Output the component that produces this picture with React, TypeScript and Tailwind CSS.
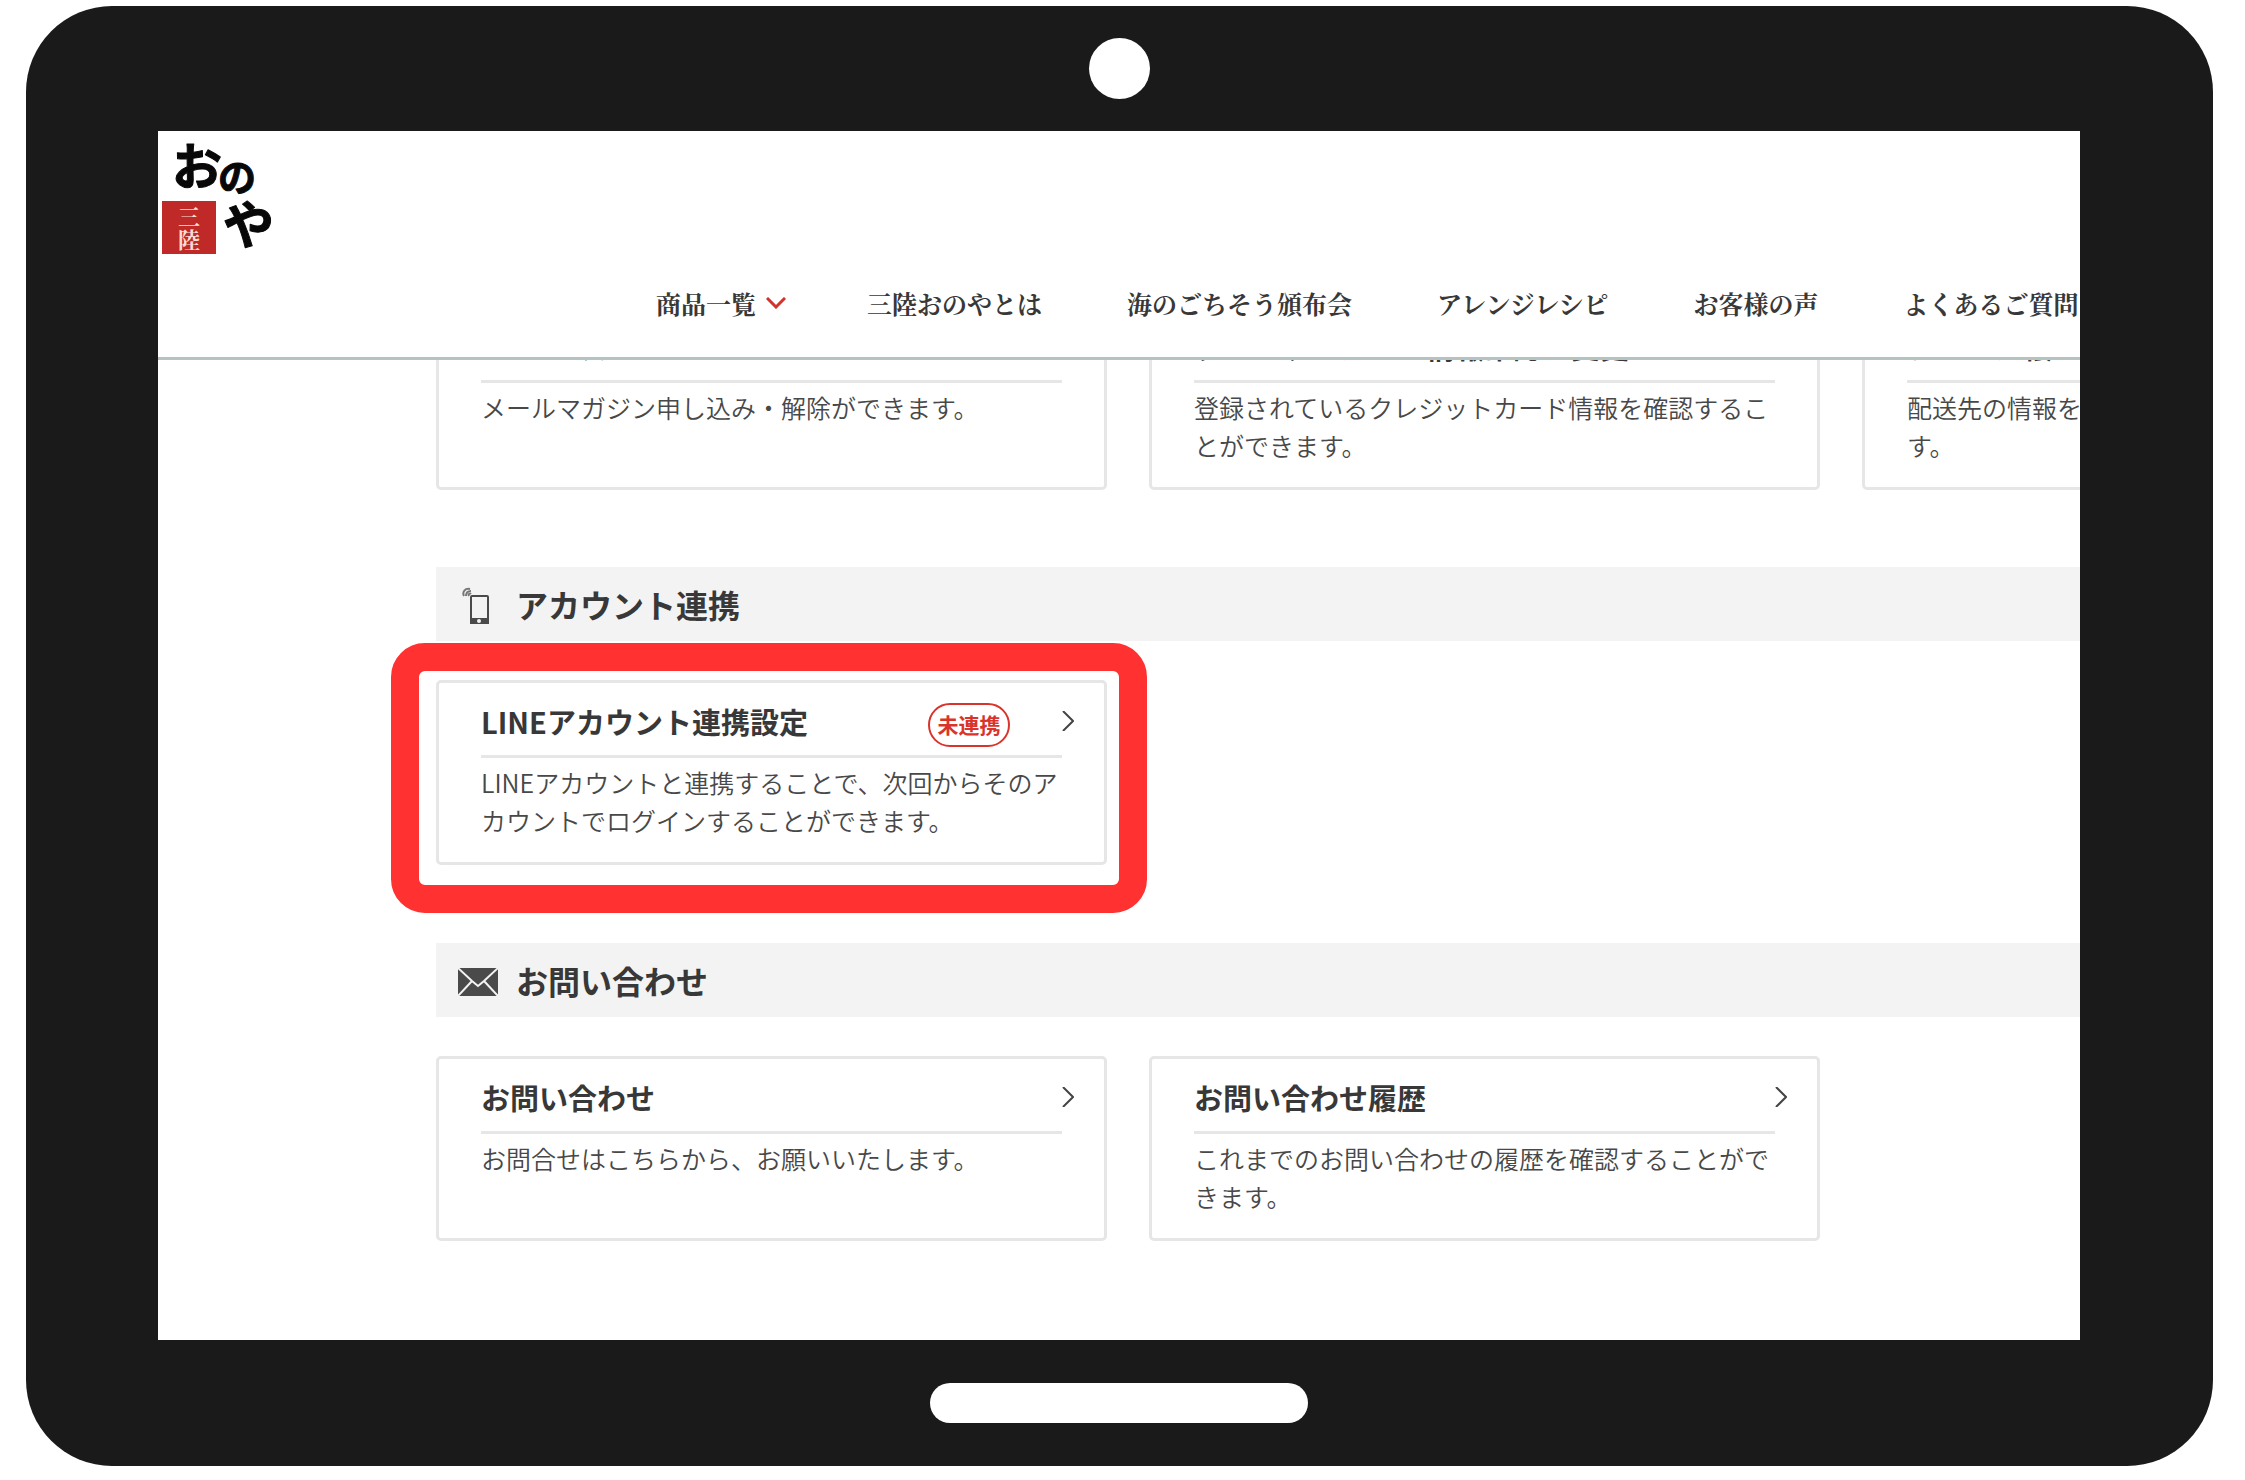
import type { ReactNode } from 'react';

interface CardProps {
  title: string;
  text: string;
  badge?: string;
}

const NAV_ITEMS = [
  { label: '商品一覧', hasMenu: true },
  { label: '三陸おのやとは' },
  { label: '海のごちそう頒布会' },
  { label: 'アレンジレシピ' },
  { label: 'お客様の声' },
  { label: 'よくあるご質問' },
];

const SETTING_CARDS: CardProps[] = [
  { title: 'メールマガジン', text: 'メールマガジン申し込み・解除ができます。' },
  {
    title: 'クレジットカード情報確認・変更',
    text: '登録されているクレジットカード情報を確認することができます。',
  },
  { title: 'アドレス帳一覧', text: '配送先の情報を確認・変更・削除することができます。' },
];

const CONTACT_CARDS: CardProps[] = [
  { title: 'お問い合わせ', text: 'お問合せはこちらから、お願いいたします。' },
  {
    title: 'お問い合わせ履歴',
    text: 'これまでのお問い合わせの履歴を確認することができます。',
  },
];

function Logo() {
  return (
    <svg viewBox="0 0 120 130" className="h-[130px] w-[120px]" role="img" aria-label="三陸 おのや">
      <g fill="#080808" stroke="#080808" strokeWidth="1" strokeLinejoin="round" fontWeight="700">
        <text x="14" y="54" fontSize="50">
          お
        </text>
        <text x="60" y="60" fontSize="38">
          の
        </text>
        <text x="65" y="113" fontSize="51">
          や
        </text>
      </g>
      <rect x="4" y="70" width="54" height="53" fill="#bf2a28" />
      <g
        fill="#f7dcd4"
        fontFamily="'Noto Serif CJK JP', 'Noto Sans CJK JP', serif"
        fontSize="22"
        fontWeight="700"
        textAnchor="middle"
      >
        <text x="31" y="94">
          三
        </text>
        <text x="31" y="117">
          陸
        </text>
      </g>
    </svg>
  );
}

function PhoneIcon() {
  return (
    <svg viewBox="0 0 28 38" className="mt-1 ml-1 h-[38px] w-[28px]" fill="none" aria-hidden="true">
      <path d="M2 9C0 5 3 1 8 2M4 9c0-3 2-5 5-5M7 9c-1-2 1-3 2-2" stroke="#777" strokeWidth="2" />
      <rect x="9" y="9" width="17" height="27" rx="1" stroke="#4a4a4a" strokeWidth="2" />
      <path d="M8 31h19v6H8z" fill="#4a4a4a" />
      <circle cx="17" cy="34" r="2" fill="#f3f3f3" />
    </svg>
  );
}

function MailIcon() {
  return (
    <svg viewBox="0 0 40 28" className="mt-1 h-[28px] w-[40px]" fill="none" aria-hidden="true">
      <path d="M0 0h40v28H0z" fill="#4a4a4a" />
      <path d="M0 0l14 13l6 5l6-5L40 0M0 28l14-15M40 28L26 13" stroke="#f3f3f3" strokeWidth="2" />
    </svg>
  );
}

function Card({ title, text, badge }: CardProps) {
  return (
    <a href="#" className="block h-[185px] rounded-[5px] border-[3px] border-[#e6e6e6] bg-white px-[42px]">
      <div className="flex h-[75px] items-center border-b-[3px] border-[#e6e6e6] pt-2">
        <h3 className="mb-1 flex-1 text-[29px] leading-10 font-bold whitespace-nowrap text-[#383838]">
          {title}
        </h3>
        {badge && (
          <span className="mt-1 mr-[52px] flex h-[44px] w-[82px] items-center justify-center rounded-full border-2 border-[#d9342b] text-[21px] font-bold text-[#d9342b]">
            {badge}
          </span>
        )}
        <svg viewBox="0 0 12 20" className="-mr-3 mb-1 h-5 w-3 shrink-0" fill="none" aria-hidden="true">
          <path d="M1 0L11 10L1 20" stroke="#444" strokeWidth="2" />
        </svg>
      </div>
      <p className="pt-[5px] text-[25px] leading-[38px] font-[350] text-[#484848]">{text}</p>
    </a>
  );
}

function CardGrid({ children }: { children: ReactNode }) {
  return <div className="grid grid-cols-[repeat(3,671px)] gap-[42px]">{children}</div>;
}

function SectionTitle({ icon, children }: { icon: ReactNode; children: ReactNode }) {
  return (
    <div className="mb-[39px] flex h-[74px] items-center bg-[#f3f3f3] pl-[22px]">
      <span className="flex w-[58px] shrink-0">{icon}</span>
      <h2 className="text-[32px] leading-10 font-bold text-[#383838]">{children}</h2>
    </div>
  );
}

function SiteHeader() {
  return (
    <header className="flex h-[229px] shrink-0 flex-col border-b-[3px] border-[#b4c2c2]">
      <a href="#" className="self-start">
        <Logo />
      </a>
      <nav className="ml-[498px] flex gap-[85px] pt-[22px] font-['Noto_Serif_CJK_JP','Noto_Sans_CJK_JP',serif] text-[25px] leading-10 font-bold whitespace-nowrap text-[#383838]">
        {NAV_ITEMS.map((item) => (
          <a key={item.label} href="#" className="flex items-center gap-2.5">
            {item.label}
            {item.hasMenu && (
              <svg viewBox="0 0 20 12" className="-mr-1 h-3 w-5" fill="none" aria-hidden="true">
                <path d="M1 1l9 9l9-9" stroke="#d0342c" strokeWidth="3" />
              </svg>
            )}
          </a>
        ))}
      </nav>
    </header>
  );
}

export default function App() {
  return (
    <div className="h-screen overflow-hidden bg-white pt-[6px] pr-[32px] pb-[14px] pl-[26px] font-['Noto_Sans_CJK_JP',sans-serif]">
      <div className="flex h-full flex-col rounded-[86px] bg-[#1a1a1a] pr-[133px] pl-[132px]">
        <div className="flex h-[125px] shrink-0 items-center justify-center">
          <span className="size-[61px] rounded-full bg-white" />
        </div>
        <div className="flex min-h-0 flex-1 flex-col overflow-hidden bg-white">
          <SiteHeader />
          <main className="min-h-0 flex-1 overflow-hidden pl-[278px]">
            {/* first row is scrolled partly under the header */}
            <section className="-mt-[55px] mb-[77px]">
              <CardGrid>
                {SETTING_CARDS.map((card) => (
                  <Card key={card.title} {...card} />
                ))}
              </CardGrid>
            </section>
            <section className="mb-[78px]">
              <SectionTitle icon={<PhoneIcon />}>アカウント連携</SectionTitle>
              <CardGrid>
                <div className="relative">
                  <Card
                    title="LINEアカウント連携設定"
                    text="LINEアカウントと連携することで、次回からそのアカウントでログインすることができます。"
                    badge="未連携"
                  />
                  <div className="pointer-events-none absolute -top-[37px] -right-[40px] -bottom-[48px] -left-[45px] rounded-[34px] border-[28px] border-[#ff3131]" />
                </div>
              </CardGrid>
            </section>
            <section>
              <SectionTitle icon={<MailIcon />}>お問い合わせ</SectionTitle>
              <CardGrid>
                {CONTACT_CARDS.map((card) => (
                  <Card key={card.title} {...card} />
                ))}
              </CardGrid>
            </section>
          </main>
        </div>
        <div className="flex h-[126px] shrink-0 items-center justify-center">
          <span className="h-[40px] w-[378px] rounded-full bg-white" />
        </div>
      </div>
    </div>
  );
}
